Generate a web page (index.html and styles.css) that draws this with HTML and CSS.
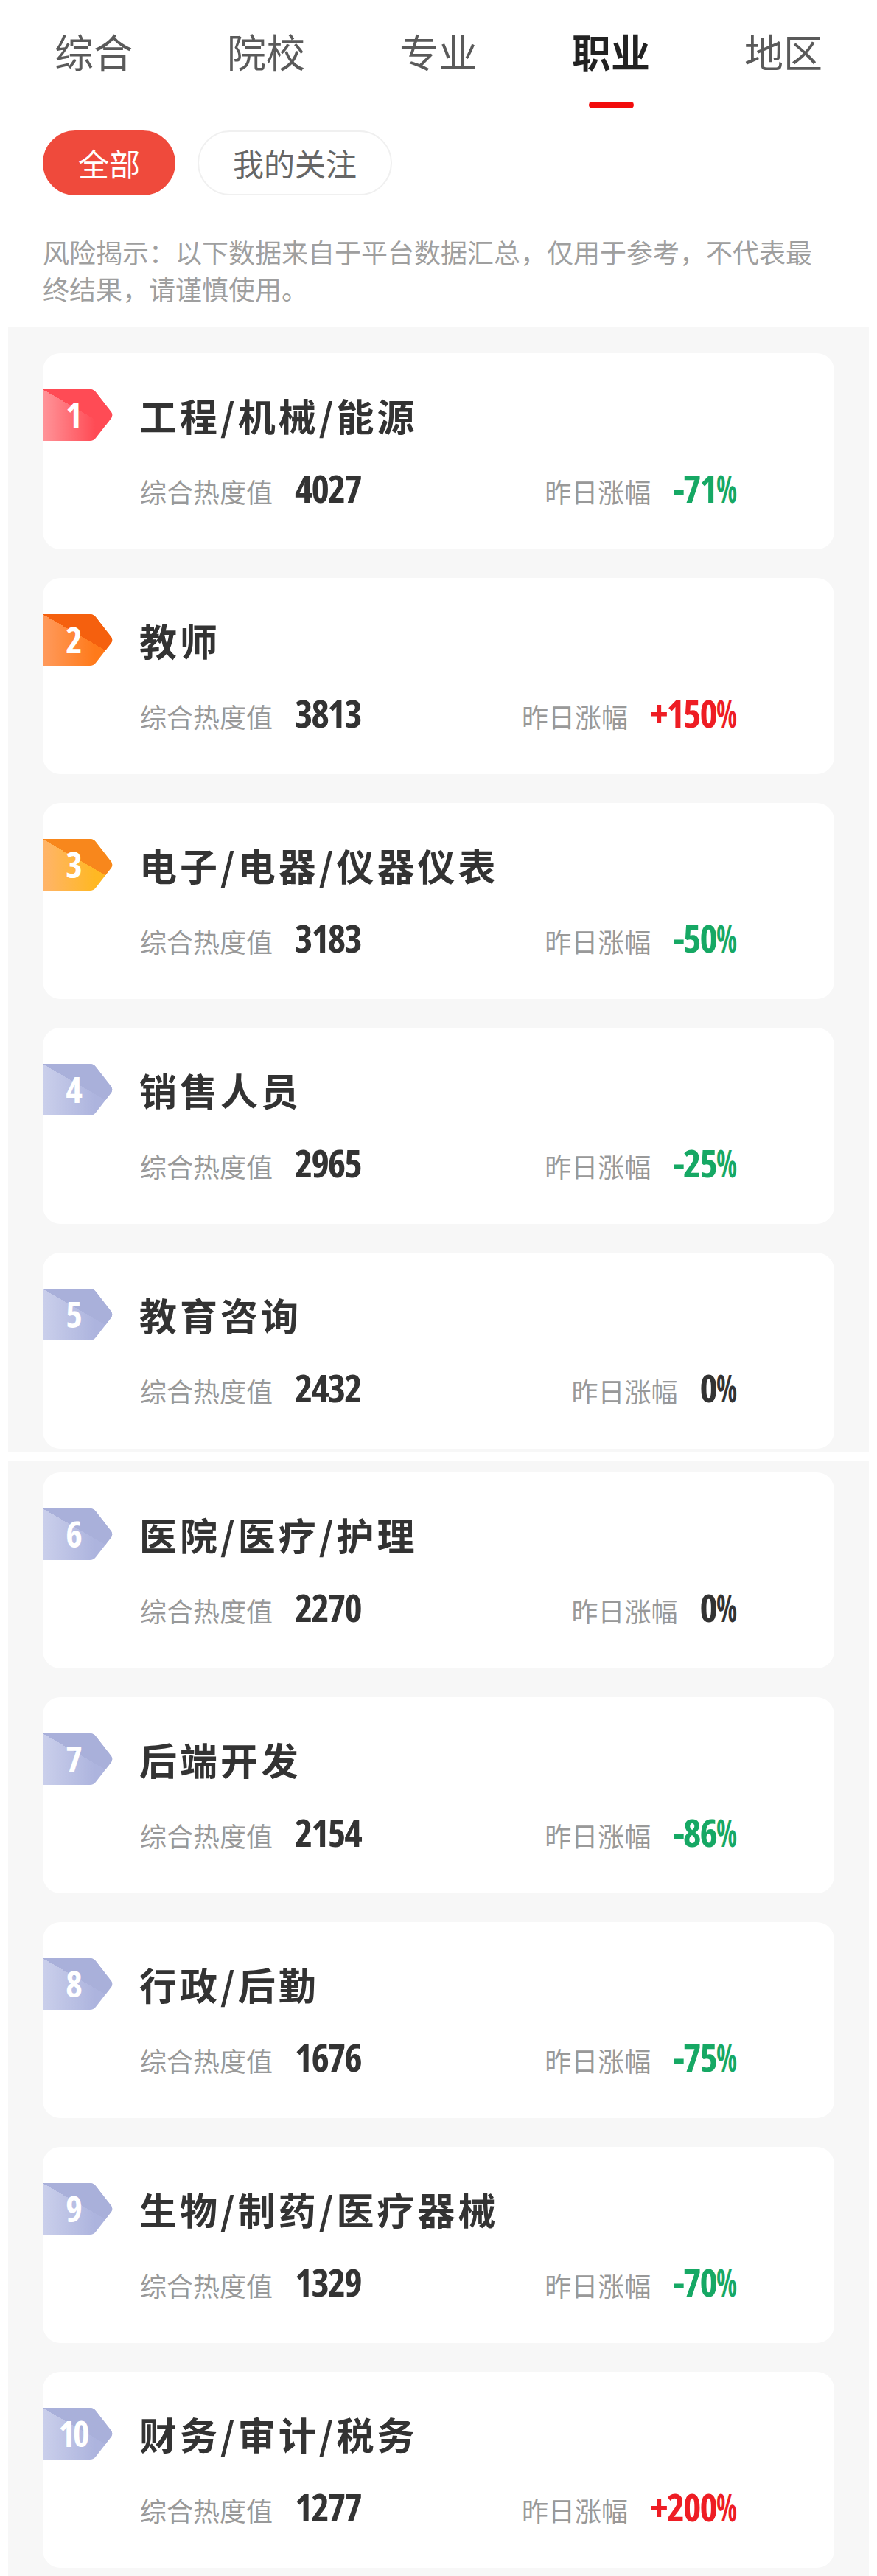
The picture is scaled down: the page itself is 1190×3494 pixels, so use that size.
FILE: index.html
```html
<!doctype html>
<html lang="zh-CN">
  <head>
    <meta charset="utf-8">
    <meta name="viewport" content="width=device-width, user-scalable=no">
    <title>职业热度榜</title>

    <link rel="stylesheet" href="styles.css">
  </head>
  <body>
    <div class="tabs">
      <div class="tab"><span class="tab-label">综合</span><i class="tab-bar"></i></div>
      <div class="tab"><span class="tab-label">院校</span><i class="tab-bar"></i></div>
      <div class="tab"><span class="tab-label">专业</span><i class="tab-bar"></i></div>
      <div class="tab tab-active"><span class="tab-label">职业</span><i class="tab-bar"></i></div>
      <div class="tab"><span class="tab-label">地区</span><i class="tab-bar"></i></div>
    </div>

    <div class="filters">
      <button class="pill pill-active">全部</button>
      <button class="pill">我的关注</button>
    </div>

    <p class="notice">风险揭示：以下数据来自于平台数据汇总，仅用于参考，不代表最终结果，请谨慎使用。</p>

    <div class="rank-list">
      <div class="card">
        <div class="card-head">
          <span class="badge badge-1"><b>1</b></span>
          <h3 class="card-title">工程/机械/能源</h3>
        </div>
        <div class="card-stats">
          <div class="stat"><span class="stat-label">综合热度值</span><span class="stat-num">4027</span></div>
          <div class="stat"><span class="stat-label">昨日涨幅</span><span class="stat-num down">-71<span class="pct">%</span></span></div>
        </div>
      </div>

      <div class="card">
        <div class="card-head">
          <span class="badge badge-2"><b>2</b></span>
          <h3 class="card-title">教师</h3>
        </div>
        <div class="card-stats">
          <div class="stat"><span class="stat-label">综合热度值</span><span class="stat-num">3813</span></div>
          <div class="stat"><span class="stat-label">昨日涨幅</span><span class="stat-num up">+150<span class="pct">%</span></span></div>
        </div>
      </div>

      <div class="card">
        <div class="card-head">
          <span class="badge badge-3"><b>3</b></span>
          <h3 class="card-title">电子/电器/仪器仪表</h3>
        </div>
        <div class="card-stats">
          <div class="stat"><span class="stat-label">综合热度值</span><span class="stat-num">3183</span></div>
          <div class="stat"><span class="stat-label">昨日涨幅</span><span class="stat-num down">-50<span class="pct">%</span></span></div>
        </div>
      </div>

      <div class="card">
        <div class="card-head">
          <span class="badge"><b>4</b></span>
          <h3 class="card-title">销售人员</h3>
        </div>
        <div class="card-stats">
          <div class="stat"><span class="stat-label">综合热度值</span><span class="stat-num">2965</span></div>
          <div class="stat"><span class="stat-label">昨日涨幅</span><span class="stat-num down">-25<span class="pct">%</span></span></div>
        </div>
      </div>

      <div class="card">
        <div class="card-head">
          <span class="badge"><b>5</b></span>
          <h3 class="card-title">教育咨询</h3>
        </div>
        <div class="card-stats">
          <div class="stat"><span class="stat-label">综合热度值</span><span class="stat-num">2432</span></div>
          <div class="stat"><span class="stat-label">昨日涨幅</span><span class="stat-num">0<span class="pct">%</span></span></div>
        </div>
      </div>
    </div>

    <div class="rank-list rank-list-next">
      <div class="card">
        <div class="card-head">
          <span class="badge"><b>6</b></span>
          <h3 class="card-title">医院/医疗/护理</h3>
        </div>
        <div class="card-stats">
          <div class="stat"><span class="stat-label">综合热度值</span><span class="stat-num">2270</span></div>
          <div class="stat"><span class="stat-label">昨日涨幅</span><span class="stat-num">0<span class="pct">%</span></span></div>
        </div>
      </div>

      <div class="card">
        <div class="card-head">
          <span class="badge"><b>7</b></span>
          <h3 class="card-title">后端开发</h3>
        </div>
        <div class="card-stats">
          <div class="stat"><span class="stat-label">综合热度值</span><span class="stat-num">2154</span></div>
          <div class="stat"><span class="stat-label">昨日涨幅</span><span class="stat-num down">-86<span class="pct">%</span></span></div>
        </div>
      </div>

      <div class="card">
        <div class="card-head">
          <span class="badge"><b>8</b></span>
          <h3 class="card-title">行政/后勤</h3>
        </div>
        <div class="card-stats">
          <div class="stat"><span class="stat-label">综合热度值</span><span class="stat-num">1676</span></div>
          <div class="stat"><span class="stat-label">昨日涨幅</span><span class="stat-num down">-75<span class="pct">%</span></span></div>
        </div>
      </div>

      <div class="card">
        <div class="card-head">
          <span class="badge"><b>9</b></span>
          <h3 class="card-title">生物/制药/医疗器械</h3>
        </div>
        <div class="card-stats">
          <div class="stat"><span class="stat-label">综合热度值</span><span class="stat-num">1329</span></div>
          <div class="stat"><span class="stat-label">昨日涨幅</span><span class="stat-num down">-70<span class="pct">%</span></span></div>
        </div>
      </div>

      <div class="card">
        <div class="card-head">
          <span class="badge"><b>10</b></span>
          <h3 class="card-title">财务/审计/税务</h3>
        </div>
        <div class="card-stats">
          <div class="stat"><span class="stat-label">综合热度值</span><span class="stat-num">1277</span></div>
          <div class="stat"><span class="stat-label">昨日涨幅</span><span class="stat-num up">+200<span class="pct">%</span></span></div>
        </div>
      </div>
    </div>
  </body>
</html>
```

FILE: styles.css
```css
* { box-sizing: border-box; }

html {
  font-family: "Noto Sans CJK SC", sans-serif;
}

body {
  margin: 0;
  background: #fff;
}

/* top tabs */
.tabs {
  display: flex;
  padding: 34px 10px 0;
}

.tab {
  flex: 1;
  display: flex;
  flex-direction: column;
  align-items: center;
}

.tab-label {
  font-size: 53px;
  line-height: 70px;
  color: #5a5a5a;
}

.tab-bar {
  display: block;
  width: 61px;
  height: 9px;
  margin-top: 34px;
  border-radius: 5px;
}

.tab-active .tab-label {
  color: #222;
  font-weight: bold;
}

.tab-active .tab-bar {
  background: #f20c0c;
}

/* filter pills */
.filters {
  display: flex;
  gap: 30px;
  margin-top: 30px;
  padding: 0 58px;
}

.pill {
  height: 88px;
  padding: 0 46px;
  border: 2px solid #f0f0f0;
  border-radius: 44px;
  background: #fff;
  font-family: inherit;
  font-size: 42px;
  line-height: 84px;
  color: #666;
}

.pill-active {
  background: #ef4a3c;
  border-color: #ef4a3c;
  color: #fff;
}

.notice {
  margin: 51px 58px 0;
  font-size: 36px;
  line-height: 50px;
  color: #9f9f9f;
}

/* ranking */
.rank-list {
  display: flex;
  flex-direction: column;
  gap: 39px;
  margin: 27px 11px 0;
  padding: 36px 47px 5px;
  background: #f7f7f7;
}

.rank-list-next {
  margin-top: 12px;
  padding-top: 15px;
  padding-bottom: 11px;
}

.card {
  height: 266px;
  padding: 49px 132px 0 0;
  border-radius: 24px;
  background: #fff;
}

.card-head {
  display: flex;
  align-items: center;
  height: 70px;
}

.badge {
  flex: none;
  display: flex;
  align-items: center;
  justify-content: center;
  width: 95px;
  height: 70px;
  padding-right: 13px;
  clip-path: path("M0 0 H64 Q69 0 72 4 L93 31 Q95.5 35 93 39 L72 66 Q69 70 64 70 H0 Z");
  background:
    linear-gradient(30deg, transparent 56%, #a9b0da 56%),
    linear-gradient(90deg, #cacfeb, #adb4de 75%);
}

.badge b {
  font-family: "Open Sans", sans-serif;
  font-stretch: 75%;
  font-size: 48px;
  line-height: 70px;
  letter-spacing: -3px;
  color: #fff;
}

.badge-1 {
  background:
    linear-gradient(30deg, transparent 56%, #ff4b55 56%),
    linear-gradient(90deg, #ff9499, #ff4b55 75%);
}

.badge-2 {
  background:
    linear-gradient(30deg, transparent 56%, #f5600e 56%),
    linear-gradient(90deg, #ff9a5c, #ff7a1a 75%);
}

.badge-3 {
  background:
    linear-gradient(30deg, transparent 56%, #f8871c 56%),
    linear-gradient(90deg, #ffb46a, #ffb823 75%);
}

.card-title {
  margin: 0 0 0 36px;
  font-size: 51px;
  line-height: 70px;
  letter-spacing: 4px;
  color: #333;
}

.card-stats {
  display: flex;
  justify-content: space-between;
  margin: 39px 0 0 132px;
}

.stat {
  display: flex;
  align-items: baseline;
}

.stat-label {
  margin-right: 30px;
  font-size: 36px;
  line-height: 50px;
  color: #999;
}

.stat-num {
  font-family: "Open Sans", sans-serif;
  font-stretch: 75%;
  font-weight: bold;
  font-size: 52px;
  line-height: 50px;
  letter-spacing: -2px;
  color: #333;
}

/* the % sign of the original font is much narrower */
.pct {
  display: inline-block;
  transform: scaleX(0.7);
  transform-origin: left center;
  margin-right: -10px;
}

.stat-num.down { color: #16a864; }
.stat-num.up { color: #ee1d24; }
```
